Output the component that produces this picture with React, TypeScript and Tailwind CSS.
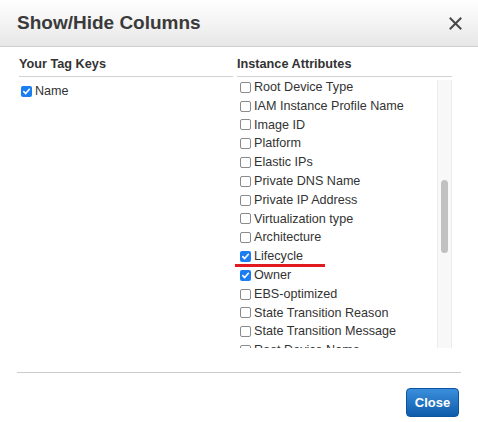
const attributes: { label: string; checked?: boolean }[] = [
  { label: "Root Device Type" },
  { label: "IAM Instance Profile Name" },
  { label: "Image ID" },
  { label: "Platform" },
  { label: "Elastic IPs" },
  { label: "Private DNS Name" },
  { label: "Private IP Address" },
  { label: "Virtualization type" },
  { label: "Architecture" },
  { label: "Lifecycle", checked: true },
  { label: "Owner", checked: true },
  { label: "EBS-optimized" },
  { label: "State Transition Reason" },
  { label: "State Transition Message" },
  { label: "Root Device Name" },
];

function Box({ checked }: { checked?: boolean }) {
  if (checked) {
    return (
      <span className="flex h-[11px] w-[11px] shrink-0 items-center justify-center rounded-[2px] bg-[#1a7ef2]">
        <svg width="9" height="9" viewBox="0 0 10 10" fill="none">
          <path d="M2 5.2 L4.1 7.3 L8.2 2.6" stroke="white" strokeWidth="1.8" strokeLinecap="round" strokeLinejoin="round" />
        </svg>
      </span>
    );
  }
  return <span className="h-[11px] w-[11px] shrink-0 rounded-[2px] border border-[#8a8a8a] bg-white" />;
}

export default function App() {
  return (
    <div className="relative h-[422px] w-[478px] overflow-hidden bg-white font-['Liberation_Sans',Arial,sans-serif] text-[#333]">
      <div className="flex h-[47px] items-center justify-between border-b border-[#cfcfcf] bg-gradient-to-b from-white to-[#e7e7e7] pl-[17px] pr-[16px]">
        <h1 className="text-[19px] font-bold text-[#3a3a3a]">Show/Hide Columns</h1>
        <svg width="13" height="13" viewBox="0 0 13 13">
          <path d="M1.5 1.5 L11.5 11.5 M11.5 1.5 L1.5 11.5" stroke="#474747" strokeWidth="2" strokeLinecap="square" />
        </svg>
      </div>

      <div className="flex gap-[4px] px-[19px]">
        <div className="w-[214px]">
          <div className="border-b border-[#d3d3d3] pb-[4px] pt-[9px] text-[12.7px] leading-[16px] font-bold">Your Tag Keys</div>
          <div className="flex h-[20px] items-center gap-[3px] pl-[2px] pt-[9px] text-[12.6px]">
            <Box checked />
            <span>Name</span>
          </div>
        </div>

        <div className="w-[215px]">
          <div className="border-b border-[#d3d3d3] pb-[4px] pt-[9px] text-[12.7px] leading-[16px] font-bold">Instance Attributes</div>
          <div className="relative flex h-[271px] overflow-hidden">
            <div className="flex-1 pt-[1px]">
              {attributes.map((a) => (
                <div key={a.label} className="flex h-[18.8px] items-center gap-[3px] pl-[3px] text-[12.6px] whitespace-nowrap">
                  <Box checked={a.checked} />
                  <span>{a.label}</span>
                </div>
              ))}
            </div>
            <div className="mt-[3px] w-[15px] border-x border-[#ebebeb] bg-[#f8f8f8] pl-[3px]">
              <div className="mt-[100px] h-[73px] w-[7px] rounded-full bg-[#c1c1c1]" />
            </div>
          </div>
        </div>
      </div>

      <div className="absolute left-[235px] top-[264px] h-[3px] w-[90px] bg-[#e01a1f]" />

      <div className="mx-[17px] mt-[24px] border-t border-[#cccccc]" />
      <div className="flex justify-end pr-[19px] pt-[15px]">
        <button className="h-[29px] w-[53px] rounded-[4px] border border-[#0b55a0] bg-gradient-to-b from-[#3a8fdc] to-[#0c5cab] text-[13px] font-bold text-white">
          Close
        </button>
      </div>
    </div>
  );
}
